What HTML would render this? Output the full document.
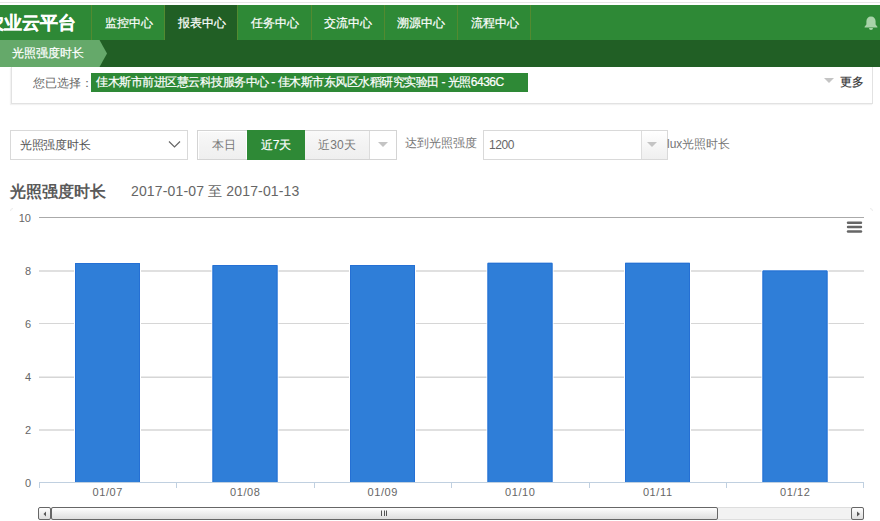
<!DOCTYPE html>
<html><head><meta charset="utf-8">
<style>
html,body{margin:0;padding:0;width:880px;height:521px;overflow:hidden;background:#fff;}
body{font-family:"Liberation Sans",sans-serif;font-size:12px;color:#555;position:relative;}
.w{-webkit-text-stroke:0.2px currentColor;}
.a{position:absolute;white-space:nowrap;}
#topline{left:0;top:2px;width:880px;height:1px;background:#e6e6e6;}
#nav{left:0;top:5px;width:880px;height:35px;background:#2e8936;}
.sep{top:5px;width:1px;height:35px;background:#538a30;}
.ni{top:5.5px;height:35px;line-height:35px;color:#fff;font-size:12px;}
#active{left:165px;top:5px;width:73px;height:35px;background:#215f25;}
#logo{left:-14px;top:6px;height:35px;line-height:35px;color:#fff;font-size:18px;font-weight:bold;}
#sub{left:0;top:40px;width:880px;height:27px;background:#215f25;}
#crumb{left:12px;top:40px;height:27px;line-height:27px;color:#fff;}
#box{left:11px;top:67px;width:860px;height:36px;border:1px solid #e2e2e2;border-top:none;box-shadow:-1px 1px 1px rgba(0,0,0,0.05);}
#lbl{left:33px;top:74px;height:19px;line-height:19px;color:#666;}
#tag{left:91px;top:73px;width:437px;height:19px;background:#2e8936;}
#tagt{left:96px;top:73px;height:19px;line-height:19px;color:#fff;letter-spacing:-0.5px;}
#more{left:840px;top:72.5px;height:19px;line-height:19px;color:#333;}
.tri{width:0;height:0;border-left:5px solid transparent;border-right:5px solid transparent;border-top:5px solid #bbb;}
.btn{top:130px;height:30px;line-height:30px;text-align:center;}
</style></head><body>
<div class="a" id="topline"></div>
<div class="a" id="nav"></div>
<div class="a" id="active"></div>
<div class="a w" id="logo">农业云平台</div>
<div class="a sep" style="left:91px"></div>
<div class="a sep" style="left:164px"></div>
<div class="a sep" style="left:237px"></div>
<div class="a sep" style="left:311px"></div>
<div class="a sep" style="left:384px"></div>
<div class="a sep" style="left:457px"></div>
<div class="a sep" style="left:530px"></div>
<div class="a ni w" style="left:105px">监控中心</div>
<div class="a ni w" style="left:178px">报表中心</div>
<div class="a ni w" style="left:251px">任务中心</div>
<div class="a ni w" style="left:324px">交流中心</div>
<div class="a ni w" style="left:397px">溯源中心</div>
<div class="a ni w" style="left:471px">流程中心</div>
<svg class="a" style="left:863px;top:15px" width="16" height="16" viewBox="0 0 16 16">
<path d="M8 1.4c-2.9 0-4.6 2.1-4.6 4.9v3.1L1.6 11.7v0.9h12.8v-0.9l-1.8-2.3V6.3C12.6 3.5 10.9 1.4 8 1.4z M6 13.1a2 2 0 0 0 4 0z" fill="#a9d3a9"/>
</svg>
<div class="a" id="sub"></div>
<svg class="a" style="left:0;top:40px" width="110" height="27"><polygon points="0,0 99.5,0 107,13.5 99.5,27 0,27" fill="#65a96a"/></svg>
<div class="a w" id="crumb">光照强度时长</div>
<div class="a" id="box"></div>
<div class="a" id="lbl">您已选择：</div>
<div class="a" id="tag"></div>
<div class="a w" id="tagt">佳木斯市前进区慧云科技服务中心 - 佳木斯市东风区水稻研究实验田 - 光照6436C</div>
<div class="a tri" style="left:824px;top:78px;border-top-color:#c4c4c4"></div>
<div class="a w" id="more">更多</div>

<!-- filter row -->
<div class="a" style="left:10px;top:130px;width:176px;height:28px;border:1px solid #d9d9d9;"></div>
<div class="a" style="left:20px;top:130px;height:30px;line-height:30px;color:#555;letter-spacing:-0.3px">光照强度时长</div>
<svg class="a" style="left:168px;top:140px" width="14" height="9"><polyline points="1,1.5 6.5,7 12,1.5" fill="none" stroke="#666" stroke-width="1.2"/></svg>

<div class="a" style="left:197px;top:130px;width:198px;height:28px;border:1px solid #d4d4d4;background:#fff"></div>
<div class="a btn" style="left:198px;top:131px;width:48px;text-indent:3px;height:28px;line-height:28px;background:linear-gradient(#f9f9f9,#f3f3f3 50%,#efefef);color:#777;box-shadow:inset 1px 1px 0 #fff">本日</div>
<div class="a btn w" style="left:247px;width:58px;background:#2e8936;color:#fff">近7天</div>
<div class="a btn" style="left:305px;top:131px;width:64px;height:28px;line-height:28px;background:linear-gradient(#f9f9f9,#f3f3f3 50%,#efefef);color:#777;border-right:1px solid #dcdcdc">近30天</div>
<div class="a tri" style="left:378px;top:142px;border-top-color:#c4c4c4"></div>
<div class="a" style="left:405px;top:128px;height:30px;line-height:30px;color:#777">达到光照强度</div>
<div class="a" style="left:483px;top:130px;width:183px;height:28px;border:1px solid #d9d9d9;"></div>
<div class="a" style="left:641px;top:131px;width:25px;height:28px;border-left:1px solid #ddd;background:linear-gradient(#fff,#efefef)"></div>
<div class="a tri" style="left:647px;top:142px;border-top-color:#c4c4c4"></div>
<div class="a" style="left:489px;top:130px;height:30px;line-height:30px;color:#666;letter-spacing:-0.4px">1200</div>
<div class="a" style="left:667px;top:129px;height:30px;line-height:30px;color:#777">lux光照时长</div>

<div class="a" style="left:10px;top:181px;height:22px;line-height:22px;font-size:16px;font-weight:bold;color:#5a5a5a">光照强度时长</div>
<div class="a" style="left:131px;top:180px;height:22px;line-height:22px;font-size:14px;color:#666;letter-spacing:0.15px">2017-01-07 至 2017-01-13</div>

<!-- chart -->
<svg class="a" style="left:0;top:200px" width="880" height="321" viewBox="0 200 880 321" font-family="Liberation Sans, sans-serif" font-size="11" fill="#666">
<g stroke="#d6d6d6">
<line x1="39" y1="271" x2="864" y2="271" stroke-width="1.5"/>
<line x1="39" y1="323.5" x2="864" y2="323.5" stroke-width="1.2"/>
<line x1="39" y1="377.2" x2="864" y2="377.2" stroke-width="1.4"/>
<line x1="39" y1="430" x2="864" y2="430" stroke-width="1.5"/>
</g>
<line x1="39" y1="217.5" x2="864" y2="217.5" stroke="#aaa"/>
<g>
<rect x="74" y="262" width="67" height="220.5" fill="#fff"/>
<rect x="75" y="263" width="65" height="220" fill="#2f7ed8"/>
<path d="M75.5 483 V263.5 H139.5 V483" fill="none" stroke="#2570d4" stroke-width="1"/>
<rect x="211.5" y="264" width="67" height="218.5" fill="#fff"/>
<rect x="212.5" y="265" width="65" height="218" fill="#2f7ed8"/>
<path d="M213.0 483 V265.5 H277.0 V483" fill="none" stroke="#2570d4" stroke-width="1"/>
<rect x="349" y="264" width="67" height="218.5" fill="#fff"/>
<rect x="350" y="265" width="65" height="218" fill="#2f7ed8"/>
<path d="M350.5 483 V265.5 H414.5 V483" fill="none" stroke="#2570d4" stroke-width="1"/>
<rect x="486.5" y="261.8" width="67" height="220.7" fill="#fff"/>
<rect x="487.5" y="262.8" width="65" height="220.2" fill="#2f7ed8"/>
<path d="M488.0 483 V263.3 H552.0 V483" fill="none" stroke="#2570d4" stroke-width="1"/>
<rect x="624" y="261.8" width="67" height="220.7" fill="#fff"/>
<rect x="625" y="262.8" width="65" height="220.2" fill="#2f7ed8"/>
<path d="M625.5 483 V263.3 H689.5 V483" fill="none" stroke="#2570d4" stroke-width="1"/>
<rect x="761.5" y="269.5" width="67" height="213.0" fill="#fff"/>
<rect x="762.5" y="270.5" width="65" height="212.5" fill="#2f7ed8"/>
<path d="M763.0 483 V271.0 H827.0 V483" fill="none" stroke="#2570d4" stroke-width="1"/>
</g>
<g stroke="#c0d0e0" stroke-width="1" fill="none">
<line x1="39" y1="482.5" x2="864" y2="482.5"/>
<line x1="39.5" y1="482" x2="39.5" y2="488"/>
<line x1="176.5" y1="482" x2="176.5" y2="488"/>
<line x1="314.5" y1="482" x2="314.5" y2="488"/>
<line x1="451.5" y1="482" x2="451.5" y2="488"/>
<line x1="589.5" y1="482" x2="589.5" y2="488"/>
<line x1="726.5" y1="482" x2="726.5" y2="488"/>
<line x1="863.5" y1="482" x2="863.5" y2="488"/>
</g>
<g text-anchor="end" transform="translate(0,1)">
<text x="31" y="221">10</text>
<text x="31" y="274">8</text>
<text x="31" y="327">6</text>
<text x="31" y="380">4</text>
<text x="31" y="433">2</text>
<text x="31" y="486">0</text>
</g>
<g text-anchor="middle" letter-spacing="0.6">
<text x="107.75" y="496">01/07</text>
<text x="245.25" y="496">01/08</text>
<text x="382.75" y="496">01/09</text>
<text x="520.25" y="496">01/10</text>
<text x="657.75" y="496">01/11</text>
<text x="795.25" y="496">01/12</text>
</g>
<g stroke="#666" stroke-width="2.4" stroke-linecap="round">
<line x1="848" y1="222.7" x2="861" y2="222.7"/>
<line x1="848" y1="227" x2="861" y2="227"/>
<line x1="848" y1="231.5" x2="861" y2="231.5"/>
</g>
<path d="M10.5 211 a2.5 2.5 0 0 1 2.5-2.5" fill="none" stroke="#ebebeb"/>
<path d="M870 208.5 a2.5 2.5 0 0 1 2.5 2.5" fill="none" stroke="#ebebeb"/>
<!-- scrollbar -->
<rect x="51" y="507.5" width="812" height="12" fill="#f2f2f2" stroke="#ddd"/>
<defs><linearGradient id="g1" x1="0" y1="0" x2="0" y2="1"><stop offset="0" stop-color="#fff"/><stop offset="1" stop-color="#dcdcdc"/></linearGradient></defs>
<rect x="38.5" y="507.5" width="12" height="12" rx="1.5" fill="url(#g1)" stroke="#666"/>
<rect x="51.5" y="507.5" width="666" height="12" rx="1.5" fill="url(#g1)" stroke="#666"/>
<rect x="851.5" y="507.5" width="12" height="12" rx="1.5" fill="url(#g1)" stroke="#666"/>
<polygon points="43.5,514 46,511.5 46,516.5" fill="#555"/>
<polygon points="860,514 857,511.5 857,516.5" fill="#555"/>
<g stroke="#555" stroke-width="1"><line x1="381.5" y1="510.5" x2="381.5" y2="516"/><line x1="384.5" y1="510.5" x2="384.5" y2="516"/><line x1="386.5" y1="510.5" x2="386.5" y2="516"/></g>
</svg>
</body></html>
